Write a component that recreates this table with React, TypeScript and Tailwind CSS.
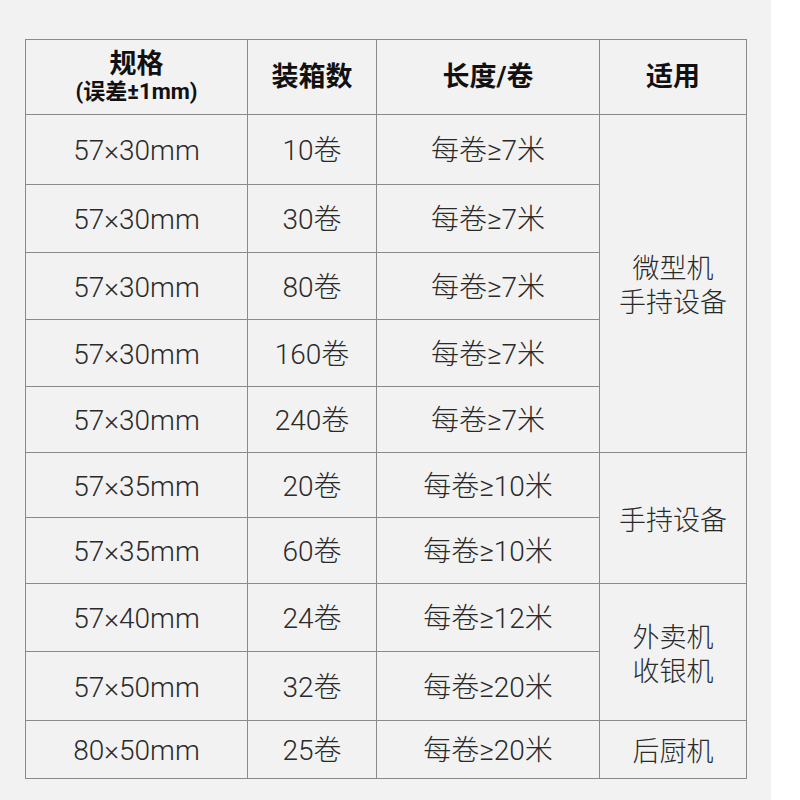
const rows = [
  { spec: "57×30mm", qty: "10卷", len: "每卷≥7米", h: "h-[70px]" },
  { spec: "57×30mm", qty: "30卷", len: "每卷≥7米", h: "h-[68px]" },
  { spec: "57×30mm", qty: "80卷", len: "每卷≥7米", h: "h-[67px]" },
  { spec: "57×30mm", qty: "160卷", len: "每卷≥7米", h: "h-[67px]" },
  { spec: "57×30mm", qty: "240卷", len: "每卷≥7米", h: "h-[66px]" },
  { spec: "57×35mm", qty: "20卷", len: "每卷≥10米", h: "h-[65px]" },
  { spec: "57×35mm", qty: "60卷", len: "每卷≥10米", h: "h-[66px]" },
  { spec: "57×40mm", qty: "24卷", len: "每卷≥12米", h: "h-[68px]" },
  { spec: "57×50mm", qty: "32卷", len: "每卷≥20米", h: "h-[69px]" },
  { spec: "80×50mm", qty: "25卷", len: "每卷≥20米", h: "h-[58px]" },
];

// which rows start a merged "适用" cell
const usage: Record<number, { span: number; lines: string[] }> = {
  0: { span: 5, lines: ["微型机", "手持设备"] },
  5: { span: 2, lines: ["手持设备"] },
  7: { span: 2, lines: ["外卖机", "收银机"] },
  9: { span: 1, lines: ["后厨机"] },
};

const cell = "border border-[#8a8a8a] text-center align-middle p-0";

export default function App() {
  return (
    <div className="w-[800px] h-[800px] bg-white font-['Roboto','Noto_Sans_CJK_SC',sans-serif]">
      <div className="w-[771px] h-[800px] bg-[#f2f2f2] pt-[39px] pl-[25px]">
        <table className="border-collapse table-fixed w-[721px]">
          <colgroup>
            <col className="w-[222px]" />
            <col className="w-[129px]" />
            <col className="w-[223px]" />
            <col className="w-[147px]" />
          </colgroup>
          <thead>
            <tr className="h-[75px] text-[#111] font-bold">
              <th className={cell}>
                <div className="text-[27px] leading-[30px]">规格</div>
                <div className="text-[22px] leading-[26px]">(误差±1mm)</div>
              </th>
              <th className={cell + " text-[27px]"}>装箱数</th>
              <th className={cell + " text-[27px]"}>长度/卷</th>
              <th className={cell + " text-[27px]"}>适用</th>
            </tr>
          </thead>
          <tbody className="text-[28px] font-light text-[#2a2a2a]">
            {rows.map((r, i) => (
              <tr key={i} className={r.h}>
                <td className={cell + " pt-[3px]"}>{r.spec}</td>
                <td className={cell + " pt-[3px]"}>{r.qty}</td>
                <td className={cell + " pt-[3px]"}>{r.len}</td>
                {usage[i] && (
                  <td className={cell + " pt-[5px] text-[27px] leading-[34px]"} rowSpan={usage[i].span}>
                    {usage[i].lines.map((l) => (
                      <div key={l}>{l}</div>
                    ))}
                  </td>
                )}
              </tr>
            ))}
          </tbody>
        </table>
      </div>
    </div>
  );
}
